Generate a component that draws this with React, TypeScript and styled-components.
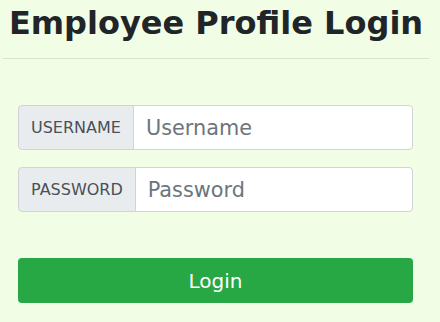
import { useState } from 'react';
import styled, { createGlobalStyle } from 'styled-components';

const GlobalStyle = createGlobalStyle`
body {
    margin: 0;
    background: #f2fde5;
    font-family: "DejaVu Sans", "Noto Sans", sans-serif;
    color: #212529;
}
`

const Page = styled.div`
width: 432px;
`

const Title = styled.h2`
margin: 4px 0 0;
font-size: 32px;
line-height: 38px;
font-weight: 700;
text-align: center;
color: #212529;
`

const Divider = styled.hr`
margin: 16px 3px 0;
border: 0;
border-top: 1px solid rgba(0, 0, 0, 0.1);
`

const LoginForm = styled.form`
display: flex;
flex-direction: column;
margin: 46px 19px 0 18px;
`

const InputGroup = styled.div`
display: flex;
height: 45px;
margin-bottom: 17px;
`

const GroupLabel = styled.label`
display: flex;
align-items: center;
padding: 0 12px;
background: #e9ecef;
border: 1px solid #ced4da;
border-radius: 4px 0 0 4px;
color: #495057;
font-size: 16px;
white-space: nowrap;
`

const TextInput = styled.input`
flex: 1;
min-width: 0;
margin-left: -1px;
padding: 0 12px;
border: 1px solid #ced4da;
border-radius: 0 4px 4px 0;
background: #fff;
color: #495057;
font-family: inherit;
font-size: 20.8px;
outline: none;
&::placeholder {
    color: #6c757d;
}
`

const SubmitButton = styled.button`
margin-top: 29px;
height: 45px;
border: 0;
border-radius: 4px;
background: #28a745;
color: #fff;
font-family: inherit;
font-size: 20px;
cursor: pointer;
`

export default function App() {
    const [username, setUsername] = useState('');
    const [password, setPassword] = useState('');

    return (
        <>
            <GlobalStyle />
            <Page>
                <Title>Employee Profile Login</Title>
                <Divider />
                <LoginForm onSubmit={(e) => e.preventDefault()}>
                    <InputGroup>
                        <GroupLabel htmlFor='username'>USERNAME</GroupLabel>
                        <TextInput id='username' placeholder='Username' autoComplete='off'
                            value={username} onChange={(e) => setUsername(e.target.value)} />
                    </InputGroup>
                    <InputGroup>
                        <GroupLabel htmlFor='password'>PASSWORD</GroupLabel>
                        <TextInput id='password' type='password' placeholder='Password'
                            value={password} onChange={(e) => setPassword(e.target.value)} />
                    </InputGroup>
                    <SubmitButton type='submit'>Login</SubmitButton>
                </LoginForm>
            </Page>
        </>
    )
}
